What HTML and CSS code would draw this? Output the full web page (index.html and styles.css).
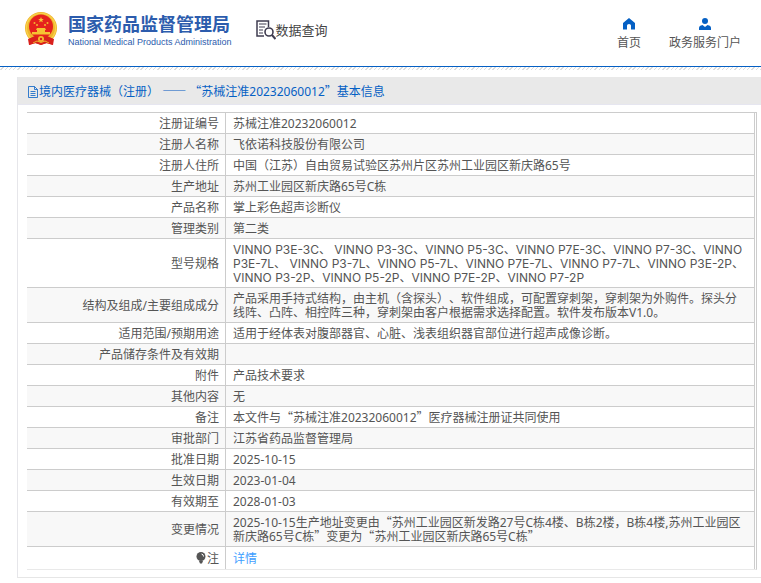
FILE: index.html
```html
<!DOCTYPE html>
<html lang="zh-CN">
<head>
<meta charset="utf-8">
<title>国家药品监督管理局 数据查询</title>
<link rel="stylesheet" href="styles.css">
</head>
<body>
<header class="top">
  <div class="brand">
    <svg class="emblem" viewBox="0 0 32 34" aria-hidden="true">
      <path d="M5 25L4 33L11 31L16 33L21 31L28 33L27 25Z" fill="#d9201c"/>
      <circle cx="16" cy="16" r="16" fill="#efb42c"/>
      <circle cx="16" cy="16" r="14.6" fill="none" stroke="#f8d04a" stroke-width="1.4"/>
      <circle cx="16" cy="14.5" r="12" fill="#e5211d"/>
      <path d="M16 5l.8 1.900 2 .1-1.600 1.300.6 2L16 9.200l-1.800 1.100.6-2L13.200 7l2-.1z" fill="#f8c733"/>
      <g fill="#f3b62f"><circle cx="9.500" cy="11" r="1"/><circle cx="12" cy="13" r="1"/><circle cx="20" cy="13" r="1"/><circle cx="22.500" cy="11" r="1"/></g>
      <path d="M12 16h8l1 2h-1v2h5v2.500H7V20h5v-2h-1z" fill="#f6c233"/>
      <path d="M3 27l7-3 4 2h4l4-2 7 3-1 6-6-2-6 2-6-2-6 2z" fill="#d9201c"/>
      <circle cx="16" cy="27" r="3" fill="#f5bb2e"/>
      <circle cx="16" cy="27" r="1.200" fill="#d9201c"/>
      <path d="M8 31l4-2 4 1.500 4-1.500 4 2" fill="none" stroke="#efb42c" stroke-width="1"/>
    </svg>
    <div>
      <div class="brand-name">国家药品监督管理局</div>
      <div class="brand-en">National Medical Products Administration</div>
    </div>
  </div>
  <div class="section">
    <svg class="search-doc" viewBox="0 0 20 20" aria-hidden="true" fill="none" stroke="#3f3c50">
      <path d="M12.500 7V1H1V16H8" stroke-width="1.500"/>
      <path d="M3 4h7.500M3 7h6M3 10h4M3 13h4" stroke-width="1.200"/>
      <circle cx="13" cy="12" r="4" stroke-width="1.600"/>
      <path d="M16 15l3.500 4" stroke-width="2"/>
    </svg><span>数据查询</span>
  </div>
  <nav class="nav">
    <a href="#">
      <svg viewBox="0 0 12 12" aria-hidden="true"><path d="M6 0L12 5V11.500H8V7.500Q8 6 6 6T4 7.500V11.500H0V5Z" fill="#0560c4"/></svg>
      首页
    </a>
    <a href="#">
      <svg viewBox="0 0 12 12" aria-hidden="true"><circle cx="6" cy="3" r="3" fill="#0560c4"/><path d="M0 12V10Q0 7.500 3.500 7L6 9L8.500 7Q12 7.500 12 10V12Z" fill="#0560c4"/></svg>
      政务服务门户
    </a>
  </nav>
</header>
<div class="hatch"></div>
<main class="panel">
  <h1 class="panel-title">
    <svg viewBox="0 0 10 12" aria-hidden="true" fill="none" stroke="#0560c4" stroke-width=".8"><path d="M.5 .5H6.500L9.500 3.500V11.500H.5ZM6.500 .5V3.500H9.500M2.500 5.500H7.500M2.500 7.500H7.500M2.500 9.500H7.500"/></svg><span>境内医疗器械（注册） <span class="cjk">——</span> <span class="cjk">“</span>苏械注准20232060012<span class="cjk">”</span>基本信息</span>
  </h1>
  <div class="frame">
    <table class="info">
      <tbody>
      <tr><th scope="row">注册证编号</th><td>苏械注准20232060012</td></tr>
      <tr><th scope="row">注册人名称</th><td>飞依诺科技股份有限公司</td></tr>
      <tr><th scope="row">注册人住所</th><td>中国（江苏）自由贸易试验区苏州片区苏州工业园区新庆路65号</td></tr>
      <tr><th scope="row">生产地址</th><td>苏州工业园区新庆路65号C栋</td></tr>
      <tr><th scope="row">产品名称</th><td>掌上彩色超声诊断仪</td></tr>
      <tr><th scope="row">管理类别</th><td>第二类</td></tr>
      <tr><th scope="row">型号规格</th><td class="models">VINNO P3E-3C、 VINNO P3-3C、VINNO P5-3C、VINNO P7E-3C、VINNO P7-3C、VINNO P3E-7L、 VINNO P3-7L、VINNO P5-7L、VINNO P7E-7L、VINNO P7-7L、VINNO P3E-2P、VINNO P3-2P、VINNO P5-2P、VINNO P7E-2P、VINNO P7-2P</td></tr>
      <tr><th scope="row">结构及组成/主要组成成分</th><td>产品采用手持式结构，由主机（含探头）、软件组成，可配置穿刺架，穿刺架为外购件。探头分线阵、凸阵、相控阵三种，穿刺架由客户根据需求选择配置。软件发布版本V1.0。</td></tr>
      <tr><th scope="row">适用范围/预期用途</th><td>适用于经体表对腹部器官、心脏、浅表组织器官部位进行超声成像诊断。</td></tr>
      <tr><th scope="row">产品储存条件及有效期</th><td></td></tr>
      <tr><th scope="row">附件</th><td>产品技术要求</td></tr>
      <tr><th scope="row">其他内容</th><td>无</td></tr>
      <tr><th scope="row">备注</th><td>本文件与<span class="cjk">“</span>苏械注准20232060012<span class="cjk">”</span>医疗器械注册证共同使用</td></tr>
      <tr><th scope="row">审批部门</th><td>江苏省药品监督管理局</td></tr>
      <tr><th scope="row">批准日期</th><td>2025-10-15</td></tr>
      <tr><th scope="row">生效日期</th><td>2023-01-04</td></tr>
      <tr><th scope="row">有效期至</th><td>2028-01-03</td></tr>
      <tr><th scope="row">变更情况</th><td>2025-10-15生产地址变更由<span class="cjk">“</span>苏州工业园区新发路27号C栋4楼、B栋2楼，B栋4楼,苏州工业园区新庆路65号C栋<span class="cjk">”</span>变更为<span class="cjk">“</span>苏州工业园区新庆路65号C栋<span class="cjk">”</span></td></tr>
      <tr class="note"><th scope="row"><svg viewBox="0 0 10 12" aria-hidden="true"><circle cx="5" cy="4.500" r="4.500" fill="#555"/><path d="M3 9H7L6 11.500H4Z" fill="#555"/><path d="M5.500 2Q7.500 2.300 7.500 4.500" fill="none" stroke="#fff"/></svg>注</th><td><a href="#">详情</a></td></tr>
      </tbody>
    </table>
  </div>
</main>
</body>
</html>
```
FILE: styles.css
```css
* { box-sizing: border-box; }

body {
  margin: 0;
  background: #fff;
  color: #555;
  font: 12px/14px "Noto Sans", "Noto Sans CJK SC", sans-serif;
  text-spacing-trim: space-all;
}

a { text-decoration: none; }

.cjk {
  font-family: "Noto Sans CJK SC", sans-serif;
  line-height: 0;
}

.top {
  display: flex;
  align-items: flex-start;
  height: 67px;
  padding: 12px 20px 0 25px;
  border-bottom: 1px solid #0560c4;
}

.brand {
  display: flex;
  gap: 11px;
  color: #2c5cad;
  white-space: nowrap;
}

.emblem { width: 32px; height: 34px; }

.brand-name {
  font-size: 18px;
  font-weight: 700;
  line-height: 24px;
}

.brand-en {
  font: 9px/12px "Liberation Sans", sans-serif;
}

.section {
  display: flex;
  align-items: center;
  margin: 8px 0 0 24px;
  color: #444;
  font-size: 13px;
  line-height: 20px;
}

.search-doc { width: 20px; height: 20px; }

.nav {
  display: flex;
  gap: 28px;
  margin: 6px 0 0 auto;
}

.nav a {
  display: flex;
  flex-direction: column;
  align-items: center;
  gap: 6px;
  color: #555;
}

.nav svg { width: 12px; height: 12px; }

.hatch {
  height: 3px;
  margin-bottom: 7px;
  background: repeating-linear-gradient(135deg, #fff 0 2px, #ddd 2px 3px);
}

.panel {
  margin-left: 17px;
  padding-bottom: 7px;
  border-left: 1px solid #e6e6ea;
  border-bottom: 1px solid #e6e6e6;
}

.panel-title {
  display: flex;
  align-items: center;
  gap: 1px;
  height: 28px;
  margin: 0 0 7px;
  padding: 2px 0 0 10px;
  background: #e9e9e9;
  border-bottom: 1px solid #e6e6f0;
  color: #0560c4;
  font-size: 12px;
  font-weight: 400;
}

.panel-title svg { width: 10px; height: 12px; }

.frame {
  margin: 0 4px 0 9px;
  padding-right: 1px;
  border: solid #ccc;
  border-width: 1px 1px 0 0;
  border-bottom: 1px solid #e9e9e9;
}

.info {
  width: 100%;
  border-spacing: 0;
  table-layout: fixed;
}

.info th,
.info td {
  padding: 4px 7px 2px;
  border-right: 1px solid #ccc;
  border-top: 1px solid #ccc;
  height: 21px;
}

.info th {
  width: 199px;
  padding-right: 6px;
  text-align: right;
  font-weight: 400;
}

.info tr:first-child > * {
  border-top: 0;
  height: 20px;
}

.info tr:nth-child(even) { background: #f8f8f8; }

.info .models {
  padding-right: 4px;
  font-family: Inter, "Noto Sans CJK SC", sans-serif;
}

.info .note > * { height: 23px; }

.note svg {
  width: 10px;
  height: 12px;
  margin-right: 1px;
  vertical-align: -1px;
}

.note a { color: #409eff; }
```
